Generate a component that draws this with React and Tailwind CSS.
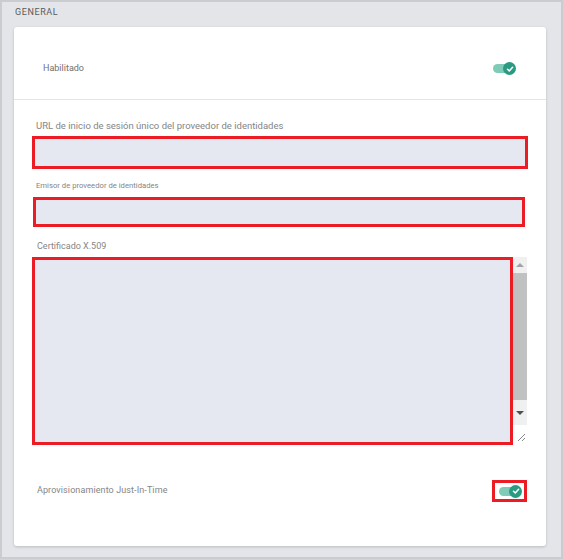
import React from "react";

const font = { fontFamily: "Roboto, 'Open Sans', Arial, sans-serif" };

function Toggle() {
  return (
    <div className="relative w-[23px] h-[13px] flex items-center">
      <div className="w-[20px] h-[9px] rounded-full bg-[#80cbb8]" />
      <div className="absolute right-0 top-0 w-[13px] h-[13px] rounded-full bg-[#2a9a82] flex items-center justify-center">
        <svg width="8" height="8" viewBox="0 0 8 8">
          <path d="M1.5 4.2 L3.3 5.9 L6.6 2.3" fill="none" stroke="#fff" strokeWidth="1.5" strokeLinecap="round" strokeLinejoin="round" />
        </svg>
      </div>
    </div>
  );
}

export default function App() {
  return (
    <div className="w-[563px] h-[559px] bg-[#e4e5e9] border-2 border-[#cbcccf] flex flex-col" style={font}>
      <div className="h-[25px] pl-[13px] pt-[4px] text-[9px] tracking-[0.6px] text-[#5a5a5a] uppercase">General</div>
      <div className="ml-[12px] w-[532px] h-[519px] bg-white rounded-[3px] shadow-[0_1px_3px_rgba(0,0,0,0.18)] flex flex-col">
        <div className="h-[73px] border-b border-[#e4e4e6] flex items-center justify-between pt-[11px] pl-[29px] pr-[30px]">
          <span className="text-[9px] text-[#707070]">Habilitado</span>
          <Toggle />
        </div>

        <div className="flex flex-col pt-[19px]">
          <div className="pl-[22px] text-[9.5px] leading-[14px] text-[#858585]">
            URL de inicio de sesión único del proveedor de identidades
          </div>
          <div className="mt-[3px] ml-[18px] w-[496px] h-[33px] border-[3px] border-[#ec1c24] bg-[#e6e8f1]" />

          <div className="mt-[11px] pl-[22px] text-[7.7px] leading-[12px] text-[#858585]">
            Emisor de proveedor de identidades
          </div>
          <div className="mt-[5px] ml-[19px] w-[492px] h-[30px] border-[3px] border-[#ec1c24] bg-[#e6e8f1]" />

          <div className="mt-[12px] pl-[23px] text-[9px] leading-[14px] text-[#858585]">
            Certificado X.509
          </div>
          <div className="mt-[4px] ml-[18px] w-[495px] h-[188px] flex">
            <div className="w-[481px] h-full border-[3px] border-[#ec1c24] bg-[#e6e8f1]" />
            <div className="flex-1 flex flex-col">
              <div className="h-[168px] bg-[#f0f0f0] flex flex-col items-center">
                <div className="h-[16px] flex items-center justify-center">
                  <div className="w-0 h-0 border-l-[4px] border-r-[4px] border-b-[4px] border-l-transparent border-r-transparent border-b-[#a3a3a3]" />
                </div>
                <div className="w-full h-[127px] bg-[#c1c1c1]" />
                <div className="flex-1 flex items-center justify-center">
                  <div className="w-0 h-0 border-l-[4px] border-r-[4px] border-t-[4px] border-l-transparent border-r-transparent border-t-[#505050]" />
                </div>
              </div>
              <div className="flex-1 flex items-end justify-end pb-[3px] pr-[1px]">
                <svg width="9" height="9" viewBox="0 0 9 9">
                  <path d="M8 1 L1 8 M8 5 L5 8" stroke="#888" strokeWidth="1" />
                </svg>
              </div>
            </div>
          </div>

          <div className="mt-[35px] pl-[23px] pr-[19px] flex items-center justify-between">
            <span className="text-[9px] tracking-[0.1px] text-[#858585]">Aprovisionamiento Just-In-Time</span>
            <div className="w-[35px] h-[22px] border-[3px] border-[#ec1c24] flex items-center justify-center pl-[2px]">
              <Toggle />
            </div>
          </div>
        </div>
      </div>
    </div>
  );
}
